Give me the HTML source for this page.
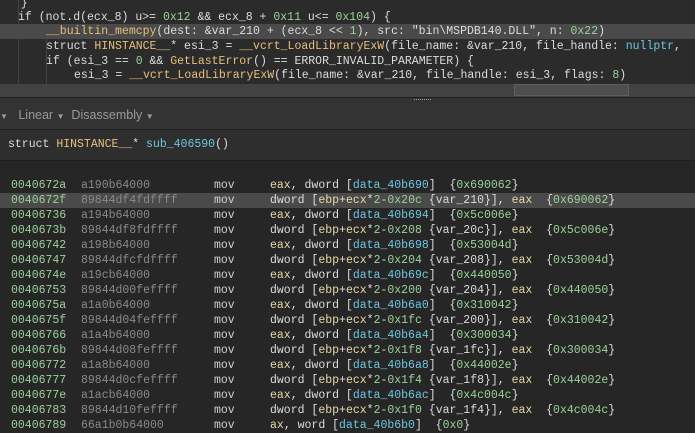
<!DOCTYPE html>
<html><head><style>
body{margin:0;width:695px;height:424px;overflow:hidden;background:#262626;font-family:"Liberation Mono",monospace;font-size:11.5px;color:#dcdcdc;position:relative}
.l{position:absolute;left:0;width:695px;height:15px;line-height:15px;white-space:pre}
.k{color:#e6e6e6}.t{color:#e8bf7e}.f{color:#e8bf7e}.n{color:#9bd19b}.c{color:#6fc6e0}.s{color:#e6e6e6}.g{color:#8a8a8a}.y{color:#e6d9a8}.b{color:#cfcfcf}
.hl{background:#4a4a4a}
</style></head><body>
<div style="position:absolute;left:0;top:0;width:695px;height:84px;background:#2b2b2b"></div>
<div style="position:absolute;left:18px;top:0;width:1px;height:84px;background:#444"></div>
<div style="position:absolute;left:46px;top:38px;width:1px;height:46px;background:#444"></div>
<div class="l" style="top:-4px;left:0">   }</div>
<div class="l" style="top:10px;padding-left:18px;width:677px">if (not.d(ecx_8) u&gt;= <span class="n">0x12</span> &amp;&amp; ecx_8 + <span class="n">0x11</span> u&lt;= <span class="n">0x104</span>) {</div>
<div class="l hl" style="top:24px;padding-left:46px;width:649px"><span class="f">__builtin_memcpy</span>(dest: &amp;var_210 + (ecx_8 &lt;&lt; <span class="n">1</span>), src: "bin\MSPDB140.DLL", n: <span class="n">0x22</span>)</div>
<div class="l" style="top:39px;padding-left:46px;width:649px">struct <span class="t">HINSTANCE__</span>* esi_3 = <span class="f">__vcrt_LoadLibraryExW</span>(file_name: &amp;var_210, file_handle: <span class="c">nullptr</span>, </div>
<div class="l" style="top:54px;padding-left:46px;width:649px">if (esi_3 == <span class="n">0</span> &amp;&amp; <span class="f">GetLastError</span>() == ERROR_INVALID_PARAMETER) {</div>
<div class="l" style="top:68px;padding-left:74px;width:621px">esi_3 = <span class="f">__vcrt_LoadLibraryExW</span>(file_name: &amp;var_210, file_handle: esi_3, flags: <span class="n">8</span>)</div>
<div style="position:absolute;left:0;top:84px;width:695px;height:13px;background:#424242"></div>
<div style="position:absolute;left:514px;top:84px;width:115px;height:12px;background:#4e4e4e;border:1px solid #5e5e5e;box-sizing:border-box"></div>
<div style="position:absolute;left:0;top:97px;width:695px;height:1px;background:#1e1e1e"></div>
<div style="position:absolute;left:0;top:98px;width:695px;height:31px;background:#333"></div>
<div style="position:absolute;left:414px;top:99px;width:17px;height:1px;border-top:1px dotted #999"></div>
<div style="position:absolute;left:0;top:98px;height:31px;line-height:34px;font-family:'Liberation Sans',sans-serif;font-size:12.5px;color:#9a9a9a;white-space:pre"><span style="font-size:8px">▼</span>   Linear <span style="font-size:8px">▼</span>  Disassembly <span style="font-size:8px">▼</span></div>
<div style="position:absolute;left:0;top:129px;width:695px;height:1px;background:#222"></div>
<div style="position:absolute;left:0;top:130px;width:695px;height:30px;background:#2e2e2e"></div>
<div class="l" style="top:137px;padding-left:8px">struct <span class="t">HINSTANCE__</span>* <span class="c">sub_406590</span>()</div>
<div style="position:absolute;left:0;top:160px;width:695px;height:1px;background:#1e1e1e"></div>
<div id="d"></div>
<script>
var rows=[
["0040672a","a190b64000",0,"data_40b690","0x690062"],
["0040672f","89844df4fdffff",1,"0x20c","var_210","0x690062"],
["00406736","a194b64000",0,"data_40b694","0x5c006e"],
["0040673b","89844df8fdffff",1,"0x208","var_20c","0x5c006e"],
["00406742","a198b64000",0,"data_40b698","0x53004d"],
["00406747","89844dfcfdffff",1,"0x204","var_208","0x53004d"],
["0040674e","a19cb64000",0,"data_40b69c","0x440050"],
["00406753","89844d00feffff",1,"0x200","var_204","0x440050"],
["0040675a","a1a0b64000",0,"data_40b6a0","0x310042"],
["0040675f","89844d04feffff",1,"0x1fc","var_200","0x310042"],
["00406766","a1a4b64000",0,"data_40b6a4","0x300034"],
["0040676b","89844d08feffff",1,"0x1f8","var_1fc","0x300034"],
["00406772","a1a8b64000",0,"data_40b6a8","0x44002e"],
["00406777","89844d0cfeffff",1,"0x1f4","var_1f8","0x44002e"],
["0040677e","a1acb64000",0,"data_40b6ac","0x4c004c"],
["00406783","89844d10feffff",1,"0x1f0","var_1f4","0x4c004c"],
["00406789","66a1b0b64000",2,"data_40b6b0","0x0"]];
var h="";
rows.forEach(function(r,i){
var top=178+i*15;
var ops;
if(r[2]==0)ops='<span class="y">eax</span>, dword [<span class="c">'+r[3]+'</span>]  {<span class="n">'+r[4]+'</span>}';
else if(r[2]==1)ops='dword [<span class="y">ebp</span>+<span class="y">ecx</span>*<span class="n">2</span>-<span class="n">'+r[3]+'</span> {'+r[4]+'}], <span class="y">eax</span>  {<span class="n">'+r[5]+'</span>}';
else ops='<span class="y">ax</span>, word [<span class="c">'+r[3]+'</span>]  {<span class="n">'+r[4]+'</span>}';
h+='<div class="l'+(i==1?' hl':'')+'" style="top:'+top+'px"><span style="position:absolute;left:11px" class="n">'+r[0]+'</span><span style="position:absolute;left:81px" class="g">'+r[1]+'</span><span style="position:absolute;left:214px" class="b">mov</span><span style="position:absolute;left:270px">'+ops+'</span></div>';
});
document.getElementById("d").innerHTML=h;
</script>
</body></html>
